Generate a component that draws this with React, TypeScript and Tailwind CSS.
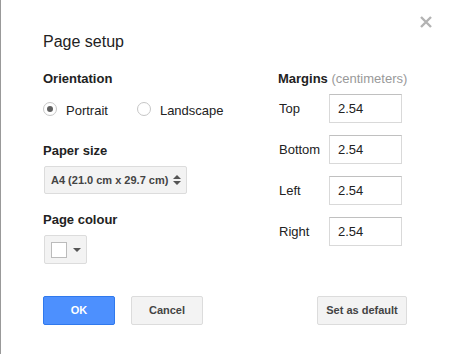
import React from 'react';

const font = { fontFamily: '"Liberation Sans", Arial, sans-serif' };

const Radio = ({ checked, label }: { checked?: boolean; label: string }) => (
  <label className="flex items-start gap-[9px] text-[13px] leading-[13px] text-[#222]">
    <span className="flex h-[14px] w-[14px] items-center justify-center rounded-full border border-[#c6c6c6] bg-white">
      {checked && <span className="h-[6px] w-[6px] rounded-full bg-[#606060]" />}
    </span>
    <span className="mt-[2px]">{label}</span>
  </label>
);

const MarginRow = ({ label, value }: { label: string; value: string }) => (
  <div className="flex h-[29px] items-center">
    <span className="w-[51px] pl-px text-[13px] leading-[13px] text-[#222]">{label}</span>
    <div className="flex h-[29px] w-[73px] items-center border border-[#d9d9d9] border-t-[#c0c0c0] pl-[8px] text-[13px] leading-[13px] text-[#222]">
      {value}
    </div>
  </div>
);

export default function App() {
  return (
    <div
      className="relative h-[354px] w-[449px] border-l border-[#999] bg-white pl-[42px] pr-[42px] pt-[34px]"
      style={font}
    >
      <svg
        className="absolute right-[17px] top-[16px]"
        width="12"
        height="12"
        viewBox="0 0 12 12"
      >
        <path d="M1 1 L11 11 M11 1 L1 11" stroke="#b3b3b3" strokeWidth="2.4" />
      </svg>

      <h1 className="text-[16px] leading-[16px] font-normal text-[#222]">Page setup</h1>

      <div className="mt-[22px] flex">
        {/* left column */}
        <div className="w-[235px] shrink-0">
          <div className="text-[13px] leading-[13px] font-bold text-[#222]">Orientation</div>
          <div className="mt-[17px] flex gap-[29px]">
            <Radio checked label="Portrait" />
            <Radio label="Landscape" />
          </div>

          <div className="mt-[27px] text-[13px] leading-[13px] font-bold text-[#222]">Paper size</div>
          <div className="ml-px mt-[9px] flex h-[28px] w-[143px] items-center justify-between rounded-[2px] border border-[#dcdcdc] bg-[#f3f3f3] pl-[6px] pr-[5px] text-[11px] font-bold text-[#444]">
            <span>A4 (21.0 cm x 29.7 cm)</span>
            <svg width="8" height="12" viewBox="0 0 8 12">
              <path d="M0 5 L4 1 L8 5 Z M0 7 L4 11 L8 7 Z" fill="#555" />
            </svg>
          </div>

          <div className="mt-[19px] text-[13px] leading-[13px] font-bold text-[#222]">Page colour</div>
          <div className="ml-px mt-[9px] flex h-[29px] w-[43px] items-center rounded-[2px] border border-[#dcdcdc] bg-[#f3f3f3] pl-[6px]">
            <span className="h-[16px] w-[16px] border border-[#bbb] bg-white" />
            <svg className="ml-[6px]" width="8" height="4" viewBox="0 0 8 4">
              <path d="M0 0 L8 0 L4 4 Z" fill="#555" />
            </svg>
          </div>
        </div>

        {/* right column */}
        <div className="flex-1 whitespace-nowrap">
          <div className="text-[13px] leading-[13px] text-[#222]">
            <span className="font-bold">Margins</span>{' '}
            <span className="text-[#999]">(centimeters)</span>
          </div>
          <div className="mt-[9px] flex flex-col gap-[12px]">
            <MarginRow label="Top" value="2.54" />
            <MarginRow label="Bottom" value="2.54" />
            <MarginRow label="Left" value="2.54" />
            <MarginRow label="Right" value="2.54" />
          </div>
        </div>
      </div>

      <div className="mt-[32px] flex items-center">
        <button className="h-[29px] w-[72px] rounded-[2px] border border-[#3079ed] bg-[#4d90fe] text-[11px] font-bold text-white">
          OK
        </button>
        <button className="ml-[16px] h-[29px] w-[72px] rounded-[2px] border border-[#dcdcdc] bg-[#f3f3f3] text-[11px] font-bold text-[#444]">
          Cancel
        </button>
        <button className="ml-auto h-[29px] w-[90px] rounded-[2px] border border-[#dcdcdc] bg-[#f3f3f3] text-[11px] font-bold text-[#444]">
          Set as default
        </button>
      </div>
    </div>
  );
}
